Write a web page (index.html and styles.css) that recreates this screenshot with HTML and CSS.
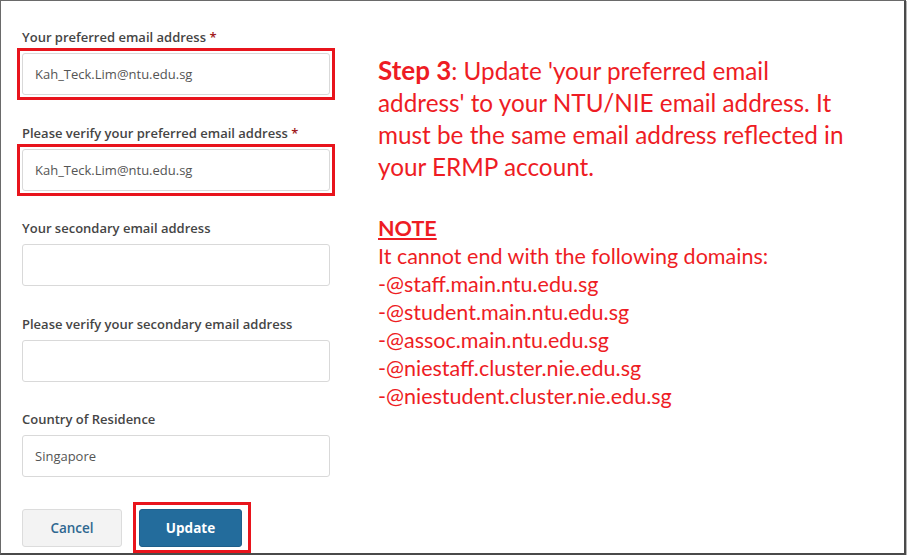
FILE: index.html
```html
<!DOCTYPE html>
<html lang="en">
<head>
<meta charset="utf-8">
<title>Update email</title>
<link rel="stylesheet" href="styles.css">
</head>
<body>
<div class="frame">
  <form class="form">
    <div class="field">
      <label class="label">Your preferred email address <span class="req">*</span></label>
      <div class="hl"><div class="input">Kah_Teck.Lim@ntu.edu.sg</div></div>
    </div>
    <div class="field">
      <label class="label">Please verify your preferred email address <span class="req">*</span></label>
      <div class="hl"><div class="input">Kah_Teck.Lim@ntu.edu.sg</div></div>
    </div>
    <div class="field">
      <label class="label">Your secondary email address</label>
      <div class="input"></div>
    </div>
    <div class="field">
      <label class="label">Please verify your secondary email address</label>
      <div class="input"></div>
    </div>
    <div class="field">
      <label class="label">Country of Residence</label>
      <div class="input">Singapore</div>
    </div>
    <div class="actions">
      <button type="button" class="btn btn-cancel">Cancel</button>
      <div class="hl-btn"><button type="button" class="btn btn-update">Update</button></div>
    </div>
  </form>
  <div class="note">
    <p class="step"><b>Step 3</b>: Update 'your preferred email<br>address' to your NTU/NIE email address. It<br>must be the same email address reflected in<br>your ERMP account.</p>
    <div class="domains">
      <div class="note-title">NOTE</div>
      <div>It cannot end with the following domains:</div>
      <div>-@staff.main.ntu.edu.sg</div>
      <div>-@student.main.ntu.edu.sg</div>
      <div>-@assoc.main.ntu.edu.sg</div>
      <div>-@niestaff.cluster.nie.edu.sg</div>
      <div>-@niestudent.cluster.nie.edu.sg</div>
    </div>
  </div>
</div>
</body>
</html>
```

FILE: styles.css
```css
* { box-sizing: border-box; }
html, body { margin: 0; padding: 0; background: #fff; }
.frame {
  width: 906px;
  height: 555px;
  border: 1px solid #6a6a6a;
  border-right: 2px solid #4a4a4a;
  border-bottom: 2px solid #4a4a4a;
  box-shadow: 1px 1px 0 #b5b5b5;
  display: flex;
  padding: 27px 0 0 21px;
  overflow: hidden;
}
.form {
  width: 308px;
  margin: 0;
  font-family: "Open Sans", sans-serif;
  font-size: 13px;
  flex: none;
  display: flex;
  flex-direction: column;
}
.field { margin-bottom: 28.5px; }
.label {
  display: block;
  height: 18px;
  line-height: 18px;
  font-weight: 600;
  color: #454545;
  margin-bottom: 7px;
}
.req { color: #a01a1a; }
.input {
  height: 42px;
  border: 1px solid #d9d9d9;
  border-radius: 3px;
  padding: 0 12px;
  line-height: 40px;
  color: #555;
  font-size: 13px;
}
.hl { outline: 3px solid #e8141c; outline-offset: 2px; }
.actions { display: flex; gap: 17px; margin-top: 3.5px; }
.btn {
  height: 38px;
  border-radius: 3px;
  font-family: "Open Sans", sans-serif;
  font-size: 13.5px;
  font-weight: 600;
  padding: 0;
  display: block;
}
.btn-cancel {
  width: 100px;
  background: #f3f3f3;
  border: 1px solid #dcdcdc;
  color: #2e6790;
}
.hl-btn {
  width: 106px;
  height: 39px;
  margin-top: -1px;
  padding-top: 1px;
  outline: 3px solid #e8141c;
  outline-offset: 3px;
}
.btn-update {
  width: 103px;
  background: #236c9c;
  border: 1px solid #1f5f8a;
  color: #fff;
  font-weight: 700;
}
.note {
  margin-left: 48px;
  padding-top: 27px;
  color: #ee1c24;
  font-family: Lato, "Open Sans", sans-serif;
}
.step {
  margin: 0;
  font-size: 24.3px;
  line-height: 32px;
  white-space: nowrap;
}
.step b { font-weight: 700; font-size: 26px; line-height: 24px; }
.domains {
  margin-top: 31px;
  font-size: 21.5px;
  line-height: 28px;
}
.note-title { font-weight: 700; text-decoration: underline; }
```
